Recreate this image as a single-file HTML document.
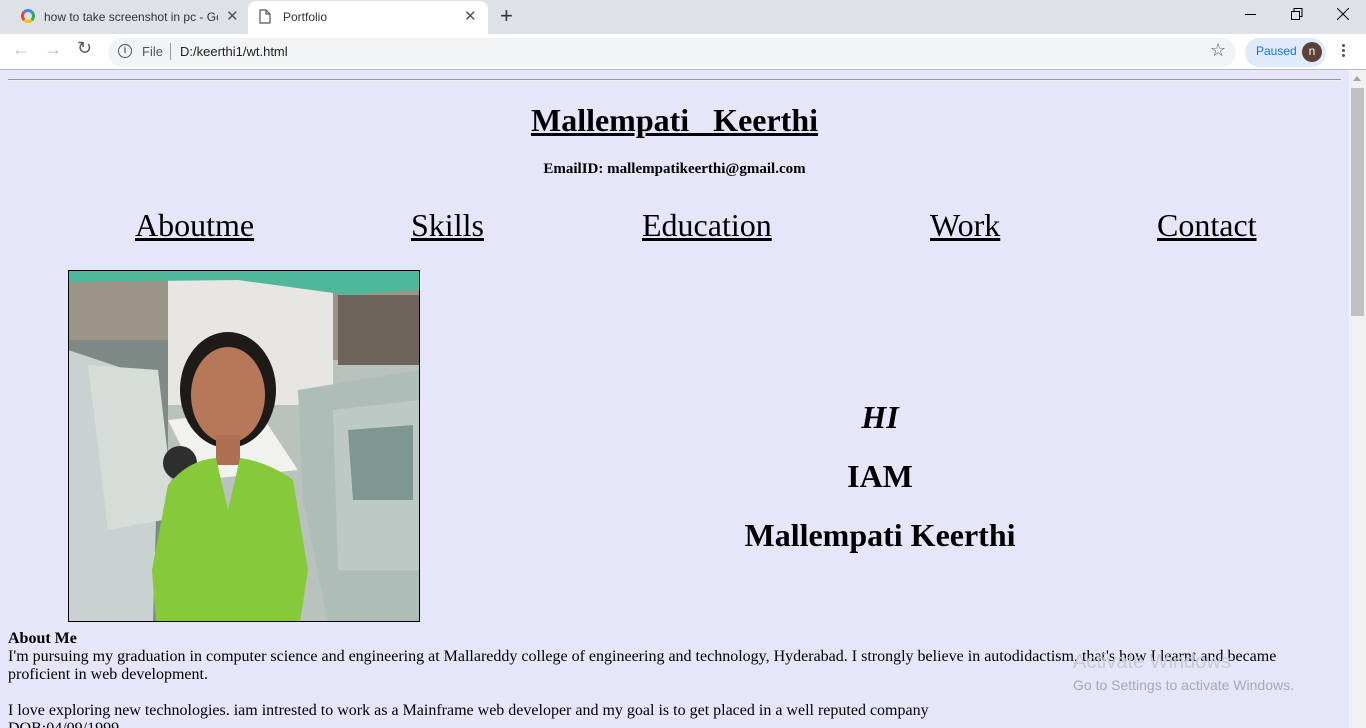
<!DOCTYPE html>
<html><head><meta charset="utf-8"><style>
*{margin:0;padding:0;box-sizing:border-box}
body{width:1366px;height:728px;overflow:hidden;position:relative;background:#fff;font-family:"Liberation Serif",serif}
.ui{font-family:"Liberation Sans",sans-serif}
.abs{position:absolute;white-space:nowrap}
#tabs{position:absolute;left:0;top:0;width:1366px;height:34px;background:#dee1e6}
#tb{position:absolute;left:0;top:34px;width:1366px;height:36px;background:#fff;border-bottom:1px solid #b8b8c0}
#page{position:absolute;left:0;top:70px;width:1349px;height:658px;background:#e6e6fa;overflow:hidden}
#sb{position:absolute;left:1349px;top:70px;width:17px;height:658px;background:#f1f1f1}
.nav{position:absolute;top:137px;font-size:32px;text-decoration:underline;color:#000}
.c{position:absolute;left:680px;width:400px;text-align:center;font-weight:bold;font-size:32px}
</style></head><body>
<div id="tabs" class="ui">
 <div class="abs" style="left:21px;top:9px;width:14px;height:14px;border-radius:50%;border:3px solid #4285f4;border-right-color:#34a853;border-bottom-color:#fbbc05;border-left-color:#ea4335"></div>
 <div class="abs" style="left:44px;top:10px;font-size:12px;color:#333;width:174px;overflow:hidden">how to take screenshot in pc - Go</div>
 <div class="abs" style="left:226px;top:7px;font-size:15px;color:#555">✕</div>
 <div class="abs" style="left:248px;top:1px;width:240px;height:33px;background:#fff;border-radius:8px 8px 0 0"></div>
 <svg class="abs" style="left:259px;top:9px" width="12" height="15"><path d="M1 1h6l4 4v9H1z M7 1v4h4" fill="none" stroke="#555" stroke-width="1.2"/></svg>
 <div class="abs" style="left:283px;top:10px;font-size:12px;color:#333">Portfolio</div>
 <div class="abs" style="left:464px;top:7px;font-size:15px;color:#555">✕</div>
 <div class="abs" style="left:500px;top:3px;font-size:22px;color:#333">+</div>
 <div class="abs" style="left:1245px;top:14px;width:11px;height:1px;background:#000"></div>
 <svg class="abs" style="left:1291px;top:8px" width="12" height="12"><path d="M0.5 3.5h8v8h-8z M3 3.5V0.5h8v8H8.5" fill="none" stroke="#000"/></svg>
 <svg class="abs" style="left:1337px;top:8px" width="12" height="12"><path d="M0 0L12 12M12 0L0 12" stroke="#000"/></svg>
</div>
<div id="tb" class="ui">
 <div class="abs" style="left:12px;top:5px;font-size:18px;color:#bbb">←</div>
 <div class="abs" style="left:44px;top:5px;font-size:18px;color:#bbb">→</div>
 <div class="abs" style="left:77px;top:4px;font-size:18px;color:#555">↻</div>
 <div style="position:absolute;left:108px;top:4px;width:1128px;height:29px;background:#f1f3f4;border-radius:15px"></div>
 <div class="abs" style="left:118px;top:10px;width:14px;height:14px;border:1.5px solid #555;border-radius:50%;font-size:9px;text-align:center;line-height:11px;color:#555;font-weight:bold">i</div>
 <div class="abs" style="left:142px;top:10px;font-size:13px;color:#555">File</div>
 <div class="abs" style="left:170px;top:9px;width:1px;height:17px;background:#999"></div>
 <div class="abs" style="left:180px;top:10px;font-size:13px;color:#222">D:/keerthi1/wt.html</div>
 <div class="abs" style="left:1210px;top:6px;font-size:18px;color:#555">☆</div>
 <div style="position:absolute;left:1245px;top:4px;width:81px;height:29px;background:#dfeafb;border-radius:15px"></div>
 <div class="abs" style="left:1256px;top:10px;font-size:12px;color:#1a73e8">Paused</div>
 <div class="abs" style="left:1302px;top:8px;width:20px;height:20px;border-radius:50%;background:#5d4037;color:#fff;font-size:12px;text-align:center;line-height:19px">n</div>
 <div class="abs" style="left:1342px;top:10px;width:3px;height:3px;background:#555;border-radius:50%;box-shadow:0 5px 0 #555,0 10px 0 #555"></div>
</div>
<div id="page">
 <div style="position:absolute;left:8px;top:9px;width:1333px;height:2px;border-top:1px solid #999;border-bottom:1px solid #eee"></div>
 <div class="abs" style="left:0;width:1349px;text-align:center;top:32px;font-size:32px;font-weight:bold;text-decoration:underline;white-space:pre">Mallempati   Keerthi</div>
 <div class="abs" style="left:0;width:1349px;text-align:center;top:91px;font-size:15px;font-weight:bold">EmailID: mallempatikeerthi@gmail.com</div>
 <div class="nav" style="left:135px">Aboutme</div>
 <div class="nav" style="left:411px">Skills</div>
 <div class="nav" style="left:642px">Education</div>
 <div class="nav" style="left:930px">Work</div>
 <div class="nav" style="left:1157px">Contact</div>
 <svg style="position:absolute;left:68px;top:200px" width="352" height="352" viewBox="0 0 352 352">
  <rect width="352" height="352" fill="#b9c2bd"/>
  <rect x="0" y="0" width="352" height="90" fill="#9d9488"/>
  <rect x="100" y="5" width="165" height="130" fill="#e8e6e2"/>
  <path d="M0 0H352V20L280 25 170 10 0 12z" fill="#4fb89a"/>
  <rect x="270" y="25" width="82" height="70" fill="#6e645c"/>
  <rect x="0" y="70" width="100" height="282" fill="#7f8a86"/>
  <path d="M0 80L60 100 90 180 85 352H0z" fill="#c9d2d0"/>
  <path d="M20 95L90 100 105 230 95 250 40 260z" fill="#d6dcd8"/>
  <path d="M100 150L190 140 230 200 130 210z" fill="#f1f1ef"/>
  <circle cx="112" cy="193" r="17" fill="#2e2e2e"/>
  <path d="M230 120L352 100V352H260L235 230z" fill="#aebdb7"/>
  <path d="M265 140L352 130V300H270z" fill="#bcc9c4"/>
  <path d="M280 160L345 155V230H285z" fill="#7f9791"/>
  <ellipse cx="160" cy="120" rx="48" ry="58" fill="#1e1a18"/>
  <ellipse cx="160" cy="125" rx="37" ry="48" fill="#b7785a"/>
  <rect x="148" y="165" width="24" height="30" fill="#ae7052"/>
  <path d="M100 215Q120 190 148 188L160 240 172 188Q200 192 225 210L240 300 232 352H88L84 300z" fill="#86c93a"/>
 </svg>
 <div style="position:absolute;left:68px;top:200px;width:352px;height:352px;border:1px solid #000"></div>
 <div class="c" style="top:329px;font-style:italic">HI</div>
 <div class="c" style="top:388px">IAM</div>
 <div class="c" style="top:447px">Mallempati Keerthi</div>
 <div style="position:absolute;left:8px;top:560px;width:1300px;font-size:16px;line-height:18px">
  <b>About Me</b><br>I'm pursuing my graduation in computer science and engineering at Mallareddy college of engineering and technology, Hyderabad. I strongly believe in autodidactism, that's how I learnt and became proficient in web development.<br><br>I love exploring new technologies. iam intrested to work as a Mainframe web developer and my goal is to get placed in a well reputed company<br>DOB:04/09/1999
 </div>
 <div class="abs ui" style="left:1073px;top:581px;font-size:20px;color:#c9c9d4">Activate Windows</div>
 <div class="abs ui" style="left:1073px;top:607px;font-size:14px;color:#a8a8b4">Go to Settings to activate Windows.</div>
</div>
<div id="sb"><div style="position:absolute;left:2px;top:18px;width:13px;height:228px;background:#c1c1c1"></div><div style="position:absolute;left:4px;top:6px;border:4px solid transparent;border-bottom:5px solid #a3a3a3;border-top:0"></div></div>
</body></html>
